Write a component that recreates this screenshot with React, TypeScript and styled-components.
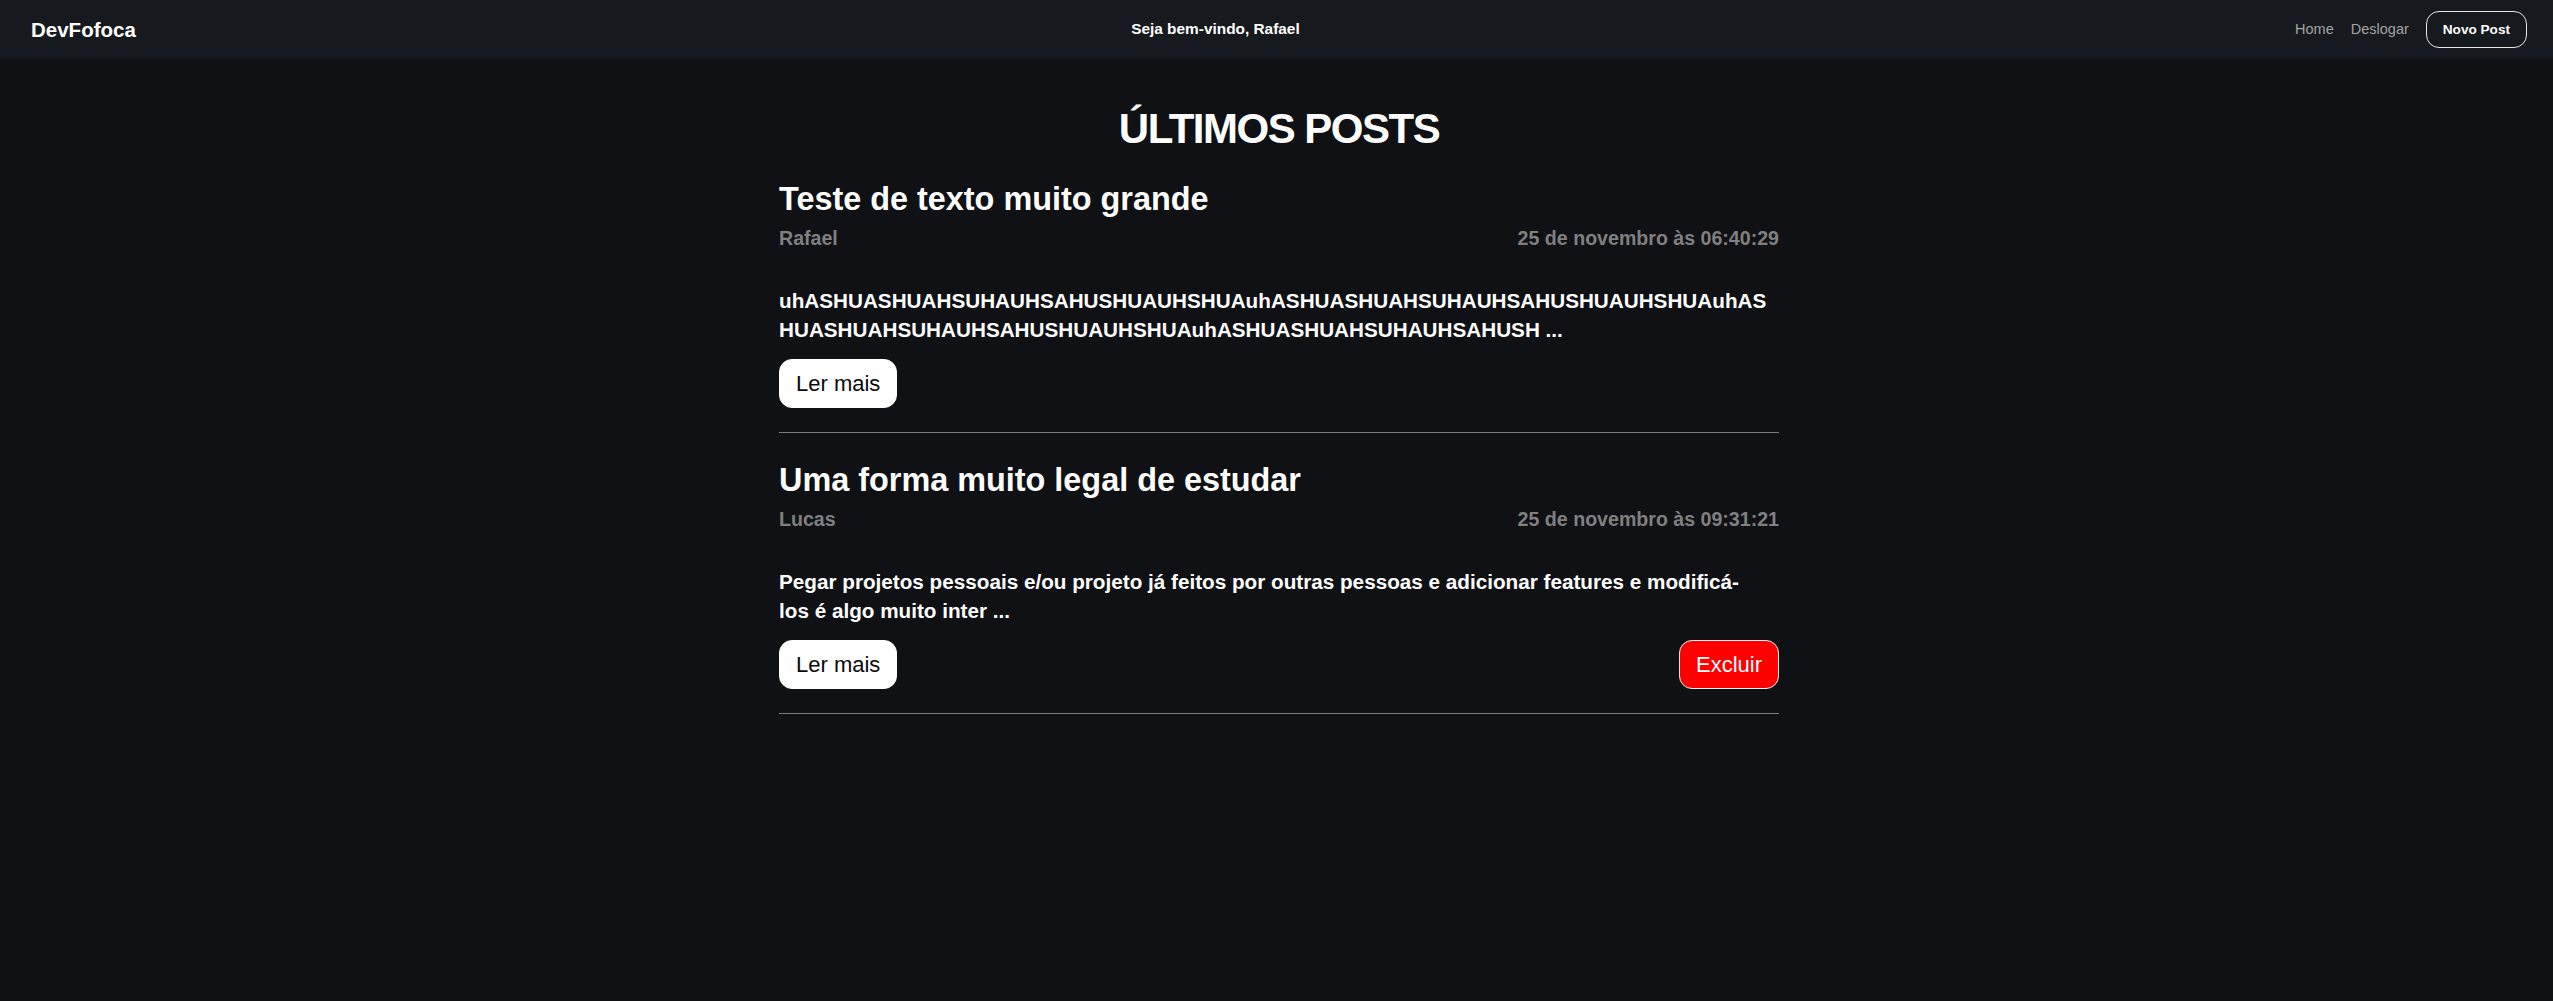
import React from "react";
import styled, { createGlobalStyle } from "styled-components";

const GlobalStyle = createGlobalStyle`
  * { box-sizing: border-box; }
  html, body {
    margin: 0;
    padding: 0;
    background: #0f1115;
    color: #ffffff;
    font-family: "Liberation Sans", Arial, sans-serif;
  }
  #root { min-height: 100vh; background: #0f1115; }
`;

const Header = styled.header`
  height: 58px;
  background: #16191e;
  display: flex;
  align-items: center;
  justify-content: space-between;
  padding: 0 26px 0 31px;
`;

const Logo = styled.a`
  font-size: 20.5px;
  font-weight: 700;
  color: #ffffff;
  text-decoration: none;
  margin-top: 2px;
`;

const Welcome = styled.span`
  font-size: 15.4px;
  font-weight: 700;
  color: #ffffff;
`;

const Nav = styled.nav`
  display: flex;
  align-items: center;
  gap: 17px;
`;

const NavLink = styled.a`
  font-size: 14.5px;
  color: #a3a3a3;
  text-decoration: none;
  cursor: pointer;
`;

const NewPostButton = styled.button`
  height: 37px;
  padding: 0 16px;
  border: 1.5px solid #e6e6e6;
  border-radius: 13px;
  background: transparent;
  color: #ffffff;
  font-family: inherit;
  font-size: 13.6px;
  font-weight: 700;
  cursor: pointer;
`;

const Main = styled.main`
  padding: 48px 0 40px 5px;
`;

const Feed = styled.section`
  max-width: 1000px;
  margin: 0 auto;
`;

const PageTitle = styled.h1`
  margin: 0;
  text-align: center;
  font-size: 42px;
  line-height: 1.1;
  font-weight: 700;
  letter-spacing: -1.5px;
  color: #ffffff;
`;

const Post = styled.article`
  padding: 28px 0 24px;
  border-bottom: 1px solid #7a7a7a;
`;

const PostTitle = styled.h2`
  margin: 0;
  font-size: 32.4px;
  line-height: 39px;
  font-weight: 700;
  color: #ffffff;
`;

const Meta = styled.div`
  margin-top: 7px;
  display: flex;
  justify-content: space-between;
  font-size: 19.6px;
  line-height: 24px;
  font-weight: 700;
  color: #808080;
`;

const Body = styled.p`
  margin: 36px 0 0;
  max-width: 989px;
  font-size: 20.7px;
  line-height: 29px;
  font-weight: 700;
  color: #ffffff;
  overflow-wrap: break-word;
  font-kerning: none;
`;

const Actions = styled.div`
  margin-top: 15px;
  display: flex;
  justify-content: space-between;
  align-items: center;
`;

const ActionButton = styled.button<{ $danger?: boolean }>`
  height: 49px;
  padding: 0 16px;
  border-radius: 13px;
  border: 1px solid ${(p) => (p.$danger ? "#f2f2f2" : "#ffffff")};
  background: ${(p) => (p.$danger ? "#ff0000" : "#ffffff")};
  color: ${(p) => (p.$danger ? "#ffffff" : "#0a0a0a")};
  font-family: inherit;
  font-size: 22px;
  font-weight: 400;
  cursor: pointer;
`;

type PostData = {
  title: string;
  author: string;
  date: string;
  text: string;
  canDelete: boolean;
};

const unit = "uhASHUASHUAHSUHAUHSAHUSHUAUHSHUA";

const posts: PostData[] = [
  {
    title: "Teste de texto muito grande",
    author: "Rafael",
    date: "25 de novembro às 06:40:29",
    text: unit + unit + unit + "uhASHUASHUAHSUHAUHSAHUSH" + " ...",
    canDelete: false,
  },
  {
    title: "Uma forma muito legal de estudar",
    author: "Lucas",
    date: "25 de novembro às 09:31:21",
    text:
      "Pegar projetos pessoais e/ou projeto já feitos por outras pessoas e adicionar features e modificá-los é algo muito inter ...",
    canDelete: true,
  },
];

export default function App() {
  return (
    <>
      <GlobalStyle />
      <Header>
        <Logo>DevFofoca</Logo>
        <Welcome>Seja bem-vindo, Rafael</Welcome>
        <Nav>
          <NavLink>Home</NavLink>
          <NavLink>Deslogar</NavLink>
          <NewPostButton>Novo Post</NewPostButton>
        </Nav>
      </Header>
      <Main>
        <Feed>
          <PageTitle>ÚLTIMOS POSTS</PageTitle>
          {posts.map((p) => (
            <Post key={p.title}>
              <PostTitle>{p.title}</PostTitle>
              <Meta>
                <span>{p.author}</span>
                <span>{p.date}</span>
              </Meta>
              <Body>{p.text}</Body>
              <Actions>
                <ActionButton>Ler mais</ActionButton>
                {p.canDelete && <ActionButton $danger>Excluir</ActionButton>}
              </Actions>
            </Post>
          ))}
        </Feed>
      </Main>
    </>
  );
}
